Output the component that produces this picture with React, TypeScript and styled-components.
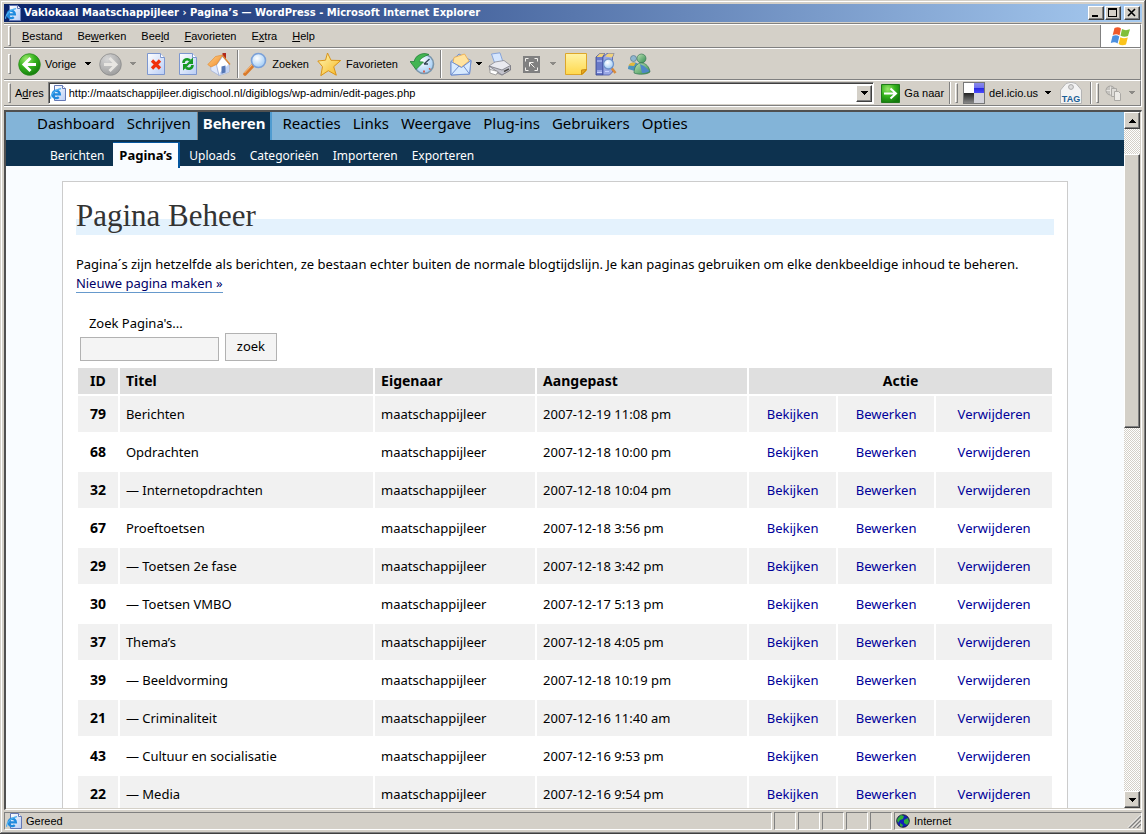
import React from 'react';
import styled, { createGlobalStyle, css } from 'styled-components';

const GlobalStyle = createGlobalStyle`
  *, *::before, *::after { box-sizing: border-box; }
  body { margin: 0; background: #d4d0c8; }
  button, input { font: inherit; color: inherit; margin: 0; padding: 0; border-radius: 0; }
  svg { display: block; flex: none; }
`;

const face = '#d4d0c8';
const uiFont = '"Liberation Sans", Arial, sans-serif';
const pageFont = '"Noto Sans", "Lucida Grande", sans-serif';

const raised = css`
  border: 1px solid;
  border-color: #ffffff #404040 #404040 #ffffff;
  box-shadow: inset -1px -1px 0 #808080;
  background: ${face};
`;

const Window = styled.div`
  display: flex;
  flex-direction: column;
  height: 100vh;
  padding: 4px;
  background: ${face};
  box-shadow: inset -1px -1px 0 #404040, inset 1px 1px 0 #d4d0c8, inset -2px -2px 0 #808080, inset 2px 2px 0 #ffffff;
  font: 11px/14px ${uiFont};
  color: #000;
`;

const TitleBar = styled.header`
  display: flex;
  align-items: center;
  height: 18px;
  flex: none;
  gap: 1px;
  padding: 0 2px 0 1px;
  background: linear-gradient(to right, #0a246a, #a6caf0);
  color: #fff;
`;

const WindowTitle = styled.h1`
  flex: 1;
  margin: 0;
  padding-left: 2px;
  font: bold 10px/18px "DejaVu Sans", sans-serif;
  white-space: nowrap;
`;

const CaptionButton = styled.button<{ $apart?: boolean }>`
  ${raised}
  width: 16px;
  height: 14px;
  margin-left: ${(p) => (p.$apart ? 2 : 0)}px;
  color: #000;
`;

const Bars = styled.div`
  flex: none;
  margin: 1px 0 3px;
  border-top: 1px solid #808080;
  border-right: 1px solid #fff;
`;

const Bar = styled.div<{ $height: number; $end?: number }>`
  display: flex;
  align-items: center;
  height: ${(p) => p.$height}px;
  padding-right: ${(p) => p.$end ?? 0}px;
  border-top: 1px solid #fff;
  border-bottom: 1px solid #808080;
  border-right: 1px solid #808080;
`;

const BarEnd = styled.div`
  height: 1px;
  background: #fff;
`;

const Grip = styled.span`
  flex: none;
  width: 3px;
  height: 20px;
  margin: 0 2px 0 4px;
  border: 1px solid;
  border-color: #fff #808080 #808080 #fff;
`;

const Divider = styled.span<{ $left?: number; $right?: number }>`
  flex: none;
  width: 2px;
  align-self: stretch;
  margin: 1px ${(p) => p.$right ?? 0}px 1px ${(p) => p.$left ?? 0}px;
  background: linear-gradient(to right, #808080 50%, #fff 50%);
`;

const MenuList = styled.nav`
  display: flex;
  flex: 1;
  gap: 1px;
  padding-left: 2px;
`;

const MenuItem = styled.button`
  border: 0;
  background: none;
  padding: 0 7px;
`;

const Throbber = styled.div`
  display: flex;
  align-items: center;
  justify-content: center;
  align-self: stretch;
  width: 40px;
  background: #fff;
  border-left: 1px solid #808080;
`;

const Tool = styled.button<{ $left?: number }>`
  display: flex;
  align-items: center;
  flex: none;
  gap: 4px;
  margin-left: ${(p) => p.$left ?? 0}px;
  border: 0;
  background: none;
  white-space: nowrap;
`;

const AddressLabel = styled.label`
  margin: 0 4px 0 2px;
`;

const AddressBox = styled.div`
  display: flex;
  align-items: center;
  flex: 1;
  height: 22px;
  padding: 0 1px 0 1px;
  background: #fff;
  border: 1px solid;
  border-color: #808080 #fff #fff #808080;
  box-shadow: inset 1px 1px 0 #404040;
`;

const AddressInput = styled.input`
  flex: 1;
  min-width: 0;
  height: 18px;
  margin-left: 3px;
  border: 0;
  background: none;
  outline: none;
`;

const SquareButton = styled.button`
  ${raised}
  display: flex;
  align-items: center;
  justify-content: center;
  flex: none;
  width: 16px;
  height: 17px;
`;

const Viewport = styled.div`
  display: flex;
  flex: 1;
  min-height: 0;
  border: solid;
  border-width: 2px 1px 1px 2px;
  border-color: #505050 #fff #fff #505050;
  padding: 0 1px 1px 0;
`;

const Page = styled.main`
  flex: 1;
  min-width: 0;
  overflow: hidden;
  background: #f9fcff;
  font: 13px/19px ${pageFont};
`;

const AdminMenu = styled.nav`
  display: flex;
  height: 28px;
  padding-left: 25px;
  background: #83b4d8;
  font-size: 15px;
  line-height: 22px;
`;

const AdminLink = styled.a<{ $current?: boolean }>`
  padding: 0 6px;
  color: #000;
  text-decoration: none;
  white-space: nowrap;
  ${(p) =>
    p.$current &&
    css`
      margin-right: 4px;
      padding: 0 5px;
      background: #0d324f;
      border-left: 1px solid #808080;
      border-right: 2px solid #4f9bd0;
      color: #fff;
      font-weight: 700;
    `}
`;

const SubMenu = styled.nav`
  display: flex;
  align-items: flex-start;
  height: 26px;
  padding: 2px 0 0 39px;
  background: #0d324f;
  font-size: 12px;
  line-height: 25px;
`;

const SubLink = styled.a<{ $current?: boolean }>`
  padding: 1px 5px 0;
  margin-right: 4px;
  color: #fff;
  text-decoration: none;
  white-space: nowrap;
  ${(p) =>
    p.$current &&
    css`
      padding: 0 6px;
      border-top: 1px solid #04569f;
      border-right: 2px solid #04569f;
      background: #f9fcff;
      color: #000;
      font-size: 13px;
      font-weight: 700;
    `}
`;

const Wrap = styled.section`
  margin: 15px 5% 0;
  padding: 16px 13px;
  border: 1px solid #ccc;
  background: #fff;
`;

const Heading = styled.h2`
  margin: 0 0 20px;
  padding-bottom: 1px;
  color: #333;
  font: 31px/36px "Liberation Serif", "Times New Roman", serif;
  background: linear-gradient(#e4f2fd, #e4f2fd) no-repeat 0 100% / 100% 16px;
`;

const Intro = styled.p`
  margin: 0 0 21px;
`;

const NewLink = styled.a`
  color: #006;
  text-decoration: none;
  border-bottom: 1px solid #69c;
`;

const SearchForm = styled.form`
  padding: 0 4px;
  margin-bottom: 5px;
`;

const SearchLabel = styled.label`
  display: block;
  padding-left: 9px;
`;

const SearchRow = styled.div`
  display: flex;
  align-items: flex-end;
  gap: 6px;
`;

const SearchInput = styled.input`
  width: 139px;
  height: 24px;
  padding: 0 4px;
  border: 1px solid #b2b2b2;
  background: #f4f4f4;
`;

const SearchButton = styled.button`
  width: 52px;
  height: 28px;
  padding-bottom: 2px;
  border: 1px solid #b2b2b2;
  background: #f4f4f4;
`;

const PageTable = styled.table`
  width: 100%;
  table-layout: fixed;
  border-collapse: separate;
  border-spacing: 2px;
`;

const Col = styled.col<{ $width?: number }>`
  width: ${(p) => (p.$width ? `${p.$width}px` : 'auto')};
`;

const HeadCell = styled.th<{ $center?: boolean }>`
  height: 26px;
  padding: 0 6px 2px;
  background: #dfdfdf;
  font-size: 14px;
  text-align: ${(p) => (p.$center ? 'center' : 'left')};
`;

const Row = styled.tr<{ $shaded: boolean }>`
  background: ${(p) => (p.$shaded ? '#f1f1f1' : 'transparent')};
`;

const IdCell = styled.th`
  height: 36px;
  padding: 0 0 2px;
  font-size: 14px;
`;

const Cell = styled.td`
  padding: 0 6px;
  white-space: nowrap;
`;

const ActionCell = styled(Cell)`
  text-align: center;
`;

const ActionLink = styled.a`
  color: #009;
  text-decoration: none;
`;

const ScrollBar = styled.div`
  display: flex;
  flex-direction: column;
  flex: none;
  width: 16px;
  background: repeating-conic-gradient(#fff 0 25%, ${face} 0 50%) 0 0 / 2px 2px;
`;

const Track = styled.div`
  flex: 1;
  padding-top: 25px;
`;

const Thumb = styled.div`
  ${raised}
  height: 43%;
`;

const StatusBar = styled.footer`
  display: flex;
  flex: none;
  gap: 2px;
  height: 18px;
  margin-top: 2px;
`;

const StatusPane = styled.div<{ $width?: number }>`
  display: flex;
  align-items: center;
  gap: 4px;
  padding-left: 1px;
  flex: ${(p) => (p.$width ? `none` : 1)};
  width: ${(p) => (p.$width ? `${p.$width}px` : 'auto')};
  border: 1px solid;
  border-color: #808080 #fff #fff #808080;
`;

const ZoneText = styled.span`
  flex: 1;
`;

const Caret = ({ faded, up, w = 6 }: { faded?: boolean; up?: boolean; w?: number }) => (
  <svg width={w} height="4" viewBox="0 0 7 4" aria-hidden="true" shapeRendering="crispEdges">
    <path d={up ? 'M0 4h7L3.5 0z' : 'M0 0h7L3.5 4z'} fill={faded ? '#8c8a86' : '#000'} />
  </svg>
);

const DefsSvg = styled.svg`
  position: absolute;
`;

const Defs = () => (
  <DefsSvg width="0" height="0" aria-hidden="true">
    <defs>
      <radialGradient id="green" cx="35%" cy="25%" r="80%"><stop offset="0" stopColor="#9be86c" /><stop offset=".5" stopColor="#35b31d" /><stop offset="1" stopColor="#137a0c" /></radialGradient>
      <radialGradient id="grey" cx="35%" cy="25%" r="80%"><stop offset="0" stopColor="#d6d6d6" /><stop offset="1" stopColor="#9c9c9c" /></radialGradient>
      <linearGradient id="sheet" x1="0" y1="0" x2="1" y2="1"><stop offset="0" stopColor="#fff" /><stop offset="1" stopColor="#b9cdf5" /></linearGradient>
      <linearGradient id="gold" x1="0" y1="0" x2="1" y2="1"><stop offset="0" stopColor="#fff9b8" /><stop offset="1" stopColor="#f6b51e" /></linearGradient>
      <linearGradient id="note" x1="0" y1="0" x2="0" y2="1"><stop offset="0" stopColor="#fff3a6" /><stop offset="1" stopColor="#ffd84c" /></linearGradient>
      <linearGradient id="roof" x1="0" y1="0" x2="1" y2="1"><stop offset="0" stopColor="#ffd08a" /><stop offset="1" stopColor="#f08a26" /></linearGradient>
      <radialGradient id="lens" cx="40%" cy="35%" r="70%"><stop offset="0" stopColor="#fff" /><stop offset="1" stopColor="#9cc9f5" /></radialGradient>
      <linearGradient id="ink" x1="0" y1="0" x2="0" y2="1"><stop offset="0" stopColor="#222" /><stop offset="1" stopColor="#888" /></linearGradient>
      <linearGradient id="azure" x1="0" y1="0" x2="0" y2="1"><stop offset="0" stopColor="#8a8ae8" /><stop offset=".45" stopColor="#7272ee" /><stop offset=".55" stopColor="#2a2ae0" /><stop offset="1" stopColor="#4c4cff" /></linearGradient>
      <linearGradient id="person" x1="0" y1="0" x2="1" y2="1"><stop offset="0" stopColor="#bfe3b4" /><stop offset="1" stopColor="#2f8a50" /></linearGradient>
    </defs>
  </DefsSvg>
);

const IeIcon = () => (
  <svg width="16" height="16" viewBox="0 0 16 16" aria-hidden="true">
    <path d="M4.500.5h8l3 3v12h-11z" fill="url(#sheet)" stroke="#6478b4" />
    <path d="M12.500.5v3h3" fill="#fff" stroke="#6478b4" />
    <path d="M2.500 9.400h7.400a3.700 3.700 0 1 0-1.100 2.700" fill="none" stroke="#1f8ade" strokeWidth="2.300" />
    <path d="M.8 13.800C-.3 11 5 4.300 11 3.600" fill="none" stroke="#4db0f2" strokeWidth="1.200" />
  </svg>
);

const RoundArrow = ({ back }: { back?: boolean }) => (
  <svg width="23" height="23" viewBox="0 0 23 23" aria-hidden="true">
    <circle cx="11.500" cy="11.500" r="10.800" fill={back ? 'url(#green)' : 'url(#grey)'} stroke={back ? '#2a8a1c' : '#8c8c8c'} strokeWidth=".8" />
    <path d={back ? 'M12.500 5 6 11.500l6.500 6.500M6.500 11.500H18' : 'M10.500 5l6.500 6.500-6.500 6.500M16.500 11.500H5'} fill="none" stroke={back ? '#fff' : '#e8e6e2'} strokeWidth="3" />
  </svg>
);

const StopIcon = () => (
  <svg width="20" height="24" viewBox="0 0 20 24" aria-hidden="true">
    <path d="M1.500 1.500h13l4 4v17h-17z" fill="url(#sheet)" stroke="#7d97cf" />
    <path d="M14.500 1.500v4h4" fill="#fff" stroke="#7d97cf" />
    <path d="M6 8.500l8 8M14 8.500l-8 8" stroke="#f0300c" strokeWidth="3.200" />
  </svg>
);

const RefreshIcon = () => (
  <svg width="20" height="24" viewBox="0 0 20 24" aria-hidden="true">
    <path d="M1.500 1.500h13l4 4v17h-17z" fill="url(#sheet)" stroke="#7d97cf" />
    <path d="M14.500 1.500v4h4" fill="#fff" stroke="#7d97cf" />
    <path d="M5.500 11c0-3.500 4-5 6.500-2.500M14.500 13c0 3.500-4 5-6.500 2.500" fill="none" stroke="#169a24" strokeWidth="2.600" />
    <path d="M15 5.500V12H8.500zM5 18.500V12h6.500z" fill="#169a24" />
  </svg>
);

const HomeIcon = () => (
  <svg width="24" height="24" viewBox="0 0 24 24" aria-hidden="true">
    <path d="M15.500 1h3.500v7l-3.500-3z" fill="#b0281c" />
    <path d="M3.500 13.500 10 12l2 11.300L4 18.500z" fill="#dfe8fb" stroke="#9fb0d8" strokeWidth=".7" />
    <path d="M9.500 13 15.500 4.500 22 12v8l-10 3.500z" fill="#fff" stroke="#8fa3cf" strokeWidth=".7" />
    <path d="M22 12v8l-10 3.500 1-3z" fill="#c3d3f3" />
    <path d="M14.500 14.500l4-1v7l-4 1.300z" fill="#5577b5" />
    <path d="M.8 12.500 8.500 4.500 15.500 3 9.500 12.500 4 15z" fill="url(#roof)" stroke="#e08526" strokeWidth=".6" />
    <path d="M15.500 3.500l7.500 9" stroke="#e08a32" strokeWidth="1.300" />
  </svg>
);

const SearchIcon = () => (
  <svg width="25" height="24" viewBox="0 0 25 24" aria-hidden="true">
    <path d="M10 13.500 2 22" stroke="#d97a2b" strokeWidth="3.600" strokeLinecap="round" />
    <path d="M9.500 12.500 1.500 21" stroke="#ffc27d" strokeWidth="1" />
    <circle cx="15.500" cy="8.500" r="7" fill="url(#lens)" stroke="#7aa0d8" strokeWidth="1.600" />
  </svg>
);

const StarIcon = () => (
  <svg width="25" height="24" viewBox="0 0 25 24" aria-hidden="true">
    <path d="M10.500 1l3.500 7.300 9.700.2-7 6.200 2.600 8.500-8-4.500-7.500 5 1.700-9L.8 9l7.700-.8z" fill="url(#gold)" stroke="#d9941a" />
  </svg>
);

const HistoryIcon = () => (
  <svg width="25" height="24" viewBox="0 0 25 24" aria-hidden="true">
    <circle cx="14" cy="12" r="9.500" fill="url(#lens)" stroke="#7a95ab" strokeWidth="1.600" />
    <path d="M14 12l5.500-5M14 12h4" stroke="#345" strokeWidth="1.300" />
    <path d="M19 16.500l1.500 1M14 18.500v2" stroke="#e04020" strokeWidth="1.500" />
    <path d="M19 2.500C12-.5 5 4 4.200 9.500L0 9.500l6 8 7.500-7.500-4.200-.3C10 6.500 14 4.500 19 2.500z" fill="#42b552" stroke="#1c7a33" strokeWidth=".7" />
  </svg>
);

const MailIcon = () => (
  <svg width="22" height="24" viewBox="0 0 22 24" aria-hidden="true">
    <path d="M1 9.500 9 2l12 6.500-1.500 13.500L1 23z" fill="#bcd8fb" stroke="#6f8fd0" />
    <path d="M4 5.500 14.500 2l4.500 7-7.500 6L3 11z" fill="#ffe3a0" stroke="#efa945" strokeWidth=".8" />
    <path d="M1 9.500l10.500 6L21 8.500 19.500 22 1 23z" fill="#d7eaff" stroke="#6f8fd0" />
    <path d="M1 23l8-9M19.500 22l-6-8" stroke="#6f8fd0" />
  </svg>
);

const PrintIcon = () => (
  <svg width="24" height="24" viewBox="0 0 24 24" aria-hidden="true">
    <path d="M3.500 2 12 .8l3 9.200-8 2z" fill="#d5e6ff" stroke="#87a4d9" />
    <path d="M1 14l6-4 9-1.500 6.500 5V18l-8.500 5-12-4.500z" fill="#e9e9ef" stroke="#85858e" strokeWidth=".8" />
    <path d="M1 14l13 4 8.500-4.500V18L14 23z" fill="#c3c3cc" stroke="#76767e" strokeWidth=".8" />
    <path d="M2 17.500 10 19.500l-2 3.500-6-2z" fill="#fff" stroke="#888" strokeWidth=".7" />
    <path d="M16 19.500l5-2.700" stroke="#444" strokeWidth="1.500" />
  </svg>
);

const EditIcon = () => (
  <svg width="17" height="17" viewBox="0 0 17 17" aria-hidden="true">
    <path d="M0 0h17v17H0z" fill="#808080" />
    <path d="M2.500 5.500v-3h3M11.500 2.500h3v3M14.500 11.500v3h-3M5.500 14.500h-3v-3M6.500 10.500v-4h4M6.500 6.500l5 5" fill="none" stroke="#f4f2ee" />
  </svg>
);

const NoteIcon = () => (
  <svg width="22" height="22" viewBox="0 0 22 22" aria-hidden="true">
    <path d="M.5.500h21v17l-4 4H.5z" fill="url(#note)" stroke="#dda62a" />
    <path d="M21.500 16.500l-5 5v-4.500z" fill="#e8a91e" stroke="#c98a12" />
  </svg>
);

const BooksIcon = () => (
  <svg width="22" height="24" viewBox="0 0 22 24" aria-hidden="true">
    <path d="M1 5l4-3.500h4.500L8 5v18H1z" fill="#6a7ac8" stroke="#34428c" strokeWidth=".8" />
    <path d="M8 5l4-3.500h7L17.500 5v15l-3 3H8z" fill="#9aa8e4" stroke="#4a58a8" strokeWidth=".8" />
    <path d="M5 1.500 1.500 5H7l2.500-3.500zM10 4.500l3-3h6l-2 4z" fill="#f0d27a" />
    <path d="M2 9h5M2 19h5M2 20.500h5M10 19.500h4" stroke="#c9d2ff" strokeWidth="1" />
    <path d="M16.500 16l4 5" stroke="#d98a3b" strokeWidth="2.600" />
    <circle cx="13.500" cy="12" r="5" fill="url(#lens)" stroke="#6f93c9" strokeWidth="1.300" />
  </svg>
);

const MessengerIcon = () => (
  <svg width="24" height="22" viewBox="0 0 24 22" aria-hidden="true">
    <circle cx="6.500" cy="5.500" r="3" fill="#8fb6cf" stroke="#57788c" strokeWidth=".7" />
    <path d="M1 16c0-8 11-9 12-1l-5 3z" fill="#4d93bd" />
    <path d="M1.500 12.500C3 9 6 9 8.500 10L7 13z" fill="#e3b93c" />
    <circle cx="14.500" cy="5.500" r="4.500" fill="url(#person)" stroke="#2b6a4c" strokeWidth=".6" />
    <path d="M7 20c0-6 3-10 7.500-10s8 4 8.500 9c-3 2.500-11 3-16 1z" fill="url(#person)" stroke="#236a48" strokeWidth=".6" />
    <path d="M13 11l4 2 5.500 5c-1.500 1.500-5 2-7.500 2z" fill="#4f86c8" />
  </svg>
);

const WindowsFlag = () => (
  <svg width="21" height="20" viewBox="0 0 21 20" aria-hidden="true">
    <path d="M4.500 2C7 .8 9 1 11 2.500L9.500 9.500C7.500 8 5.500 8 2.700 9z" fill="#f0592a" />
    <path d="M12 3c2.500 1.500 5 1.400 8 .3L18 10c-2.500 1.200-5 1-7.500-.3z" fill="#7fbf3a" />
    <path d="M2.500 10c2.500-1 4.800-1 6.800.5L7.600 17.500C5.600 16 3.500 16 .8 17z" fill="#4b8fe0" />
    <path d="M10.300 11.200c2.200 1.300 4.800 1.300 7.500.2L16 18.500c-2.800 1.200-5.200 1-7.400-.4z" fill="#fbc41c" />
  </svg>
);

const GoIcon = () => (
  <svg width="19" height="19" viewBox="0 0 19 19" aria-hidden="true">
    <path d="M.5.500h18v18H.5z" fill="url(#green)" stroke="#1f7a1a" />
    <path d="M3 9.500h12M9.500 4.500l5.500 5-5.500 5" fill="none" stroke="#fff" strokeWidth="2" />
  </svg>
);

const DeliciousIcon = () => (
  <svg width="22" height="22" viewBox="0 0 22 22" aria-hidden="true" shapeRendering="crispEdges">
    <path d="M0 0h22v22H0z" fill="#777" />
    <path d="M1 1h10v10H1z" fill="#fff" />
    <path d="M11 1h10v10H11z" fill="url(#azure)" />
    <path d="M1 11h10v10H1z" fill="url(#ink)" />
    <path d="M11 11h10v10H11z" fill="#d3d3da" />
  </svg>
);

const TagIcon = () => (
  <svg width="22" height="22" viewBox="0 0 22 22" aria-hidden="true">
    <path d="M.5 21.500V8L6 1.500Q11-1 16 1.500L21.500 8v13.500z" fill="#f3f3f3" stroke="#b4b4b4" />
    <circle cx="11" cy="5" r="2.400" fill="#ddd" stroke="#a8a8a8" />
    <text x="11" y="20" textAnchor="middle" fontFamily="Liberation Sans" fontWeight="700" fontSize="9" fill="#1c5f96">TAG</text>
  </svg>
);

const CopyIcon = () => (
  <svg width="17" height="17" viewBox="0 0 17 17" aria-hidden="true">
    <circle cx="5.500" cy="5.500" r="4.500" fill="#c4c2be" stroke="#a5a39f" />
    <path d="M1.500 5.500h8M5.500 1.500v8" stroke="#e6e4e0" />
    <path d="M6.500 3.500h5v8h-5z" fill="#dedcd8" stroke="#aaa8a4" />
    <path d="M9.500 6.500h4l2 2v7h-6z" fill="#eceae6" stroke="#aaa8a4" />
  </svg>
);

const GlobeIcon = () => (
  <svg width="14" height="14" viewBox="0 0 14 14" aria-hidden="true">
    <circle cx="7" cy="7" r="6.300" fill="#1220b8" stroke="#111" strokeWidth=".8" />
    <path d="M2 4l3-3 3 1-1 3-3 1-2 3-1-3zM8 6l4-2 1 4-2 3-3-2zM4 9l3 2-1 2-2-1z" fill="#2fae3a" />
  </svg>
);

const ResizeGrip = () => (
  <svg width="14" height="14" viewBox="0 0 14 14" aria-hidden="true">
    <path d="M2 14 14 2M6 14l8-8M10 14l4-4" stroke="#808080" strokeWidth="1.500" />
    <path d="M1 13.500 13.500 1M5 13.500 13.500 5M9 13.500 13.500 9" stroke="#fff" strokeWidth=".8" />
  </svg>
);

const menus: [string, string, string][] = [
  ['', 'B', 'estand'], ['Be', 'w', 'erken'], ['Bee', 'l', 'd'], ['', 'F', 'avorieten'], ['E', 'x', 'tra'], ['', 'H', 'elp'],
];
const sections = ['Dashboard', 'Schrijven', 'Beheren', 'Reacties', 'Links', 'Weergave', 'Plug-ins', 'Gebruikers', 'Opties'];
const subsections = ['Berichten', 'Pagina’s', 'Uploads', 'Categorieën', 'Importeren', 'Exporteren'];
const pages: [number, string, string][] = [
  [79, 'Berichten', '2007-12-19 11:08 pm'],
  [68, 'Opdrachten', '2007-12-18 10:00 pm'],
  [32, '— Internetopdrachten', '2007-12-18 10:04 pm'],
  [67, 'Proeftoetsen', '2007-12-18 3:56 pm'],
  [29, '— Toetsen 2e fase', '2007-12-18 3:42 pm'],
  [30, '— Toetsen VMBO', '2007-12-17 5:13 pm'],
  [37, 'Thema’s', '2007-12-18 4:05 pm'],
  [39, '— Beeldvorming', '2007-12-18 10:19 pm'],
  [21, '— Criminaliteit', '2007-12-16 11:40 am'],
  [43, '— Cultuur en socialisatie', '2007-12-16 9:53 pm'],
  [22, '— Media', '2007-12-16 9:54 pm'],
];

export default function App() {
  return (
    <>
      <GlobalStyle />
      <Defs />
      <Window>
        <TitleBar>
          <IeIcon />
          <WindowTitle>Vaklokaal Maatschappijleer › Pagina’s — WordPress - Microsoft Internet Explorer</WindowTitle>
          <CaptionButton aria-label="Minimaliseren">
            <svg width="14" height="12" viewBox="0 0 14 12"><path d="M3 8h6v2H3z" /></svg>
          </CaptionButton>
          <CaptionButton aria-label="Maximaliseren">
            <svg width="14" height="12" viewBox="0 0 14 12"><path d="M2 1h9v9H2zM3 3v6h7V3z" fillRule="evenodd" /></svg>
          </CaptionButton>
          <CaptionButton $apart aria-label="Sluiten">
            <svg width="14" height="12" viewBox="0 0 14 12"><path d="M3 2l7 7M10 2 3 9" stroke="#000" strokeWidth="1.600" /></svg>
          </CaptionButton>
        </TitleBar>

        <Bars>
          <Bar $height={24}>
            <Grip />
            <MenuList>
              {menus.map(([a, key, b]) => (
                <MenuItem key={a + key + b}>{a}<u>{key}</u>{b}</MenuItem>
              ))}
            </MenuList>
            <Throbber><WindowsFlag /></Throbber>
          </Bar>
          <Bar $height={32}>
            <Grip />
            <Tool $left={5}><RoundArrow back />Vorige</Tool>
            <Tool $left={9} aria-label="Vorige pagina's"><Caret /></Tool>
            <Tool $left={8} aria-label="Volgende"><RoundArrow /></Tool>
            <Tool $left={8} aria-label="Volgende pagina's"><Caret faded /></Tool>
            <Tool $left={10} aria-label="Stoppen"><StopIcon /></Tool>
            <Tool $left={12} aria-label="Vernieuwen"><RefreshIcon /></Tool>
            <Tool $left={9} aria-label="Startpagina"><HomeIcon /></Tool>
            <Divider $left={6} $right={4} />
            <Tool><SearchIcon />Zoeken</Tool>
            <Tool $left={8}><StarIcon />Favorieten</Tool>
            <Tool $left={12} aria-label="Geschiedenis"><HistoryIcon /></Tool>
            <Divider $left={5} $right={8} />
            <Tool aria-label="E-mail"><MailIcon /><Caret /></Tool>
            <Tool $left={6} aria-label="Afdrukken"><PrintIcon /></Tool>
            <Tool $left={11} aria-label="Bewerken"><EditIcon /></Tool>
            <Tool $left={10} aria-label="Bewerken met"><Caret faded /></Tool>
            <Tool $left={9} aria-label="Discussiëren"><NoteIcon /></Tool>
            <Tool $left={8} aria-label="Onderzoek"><BooksIcon /></Tool>
            <Tool $left={10} aria-label="Messenger"><MessengerIcon /></Tool>
          </Bar>
          <Bar $height={26} $end={5}>
            <Grip />
            <AddressLabel htmlFor="address">A<u>d</u>res</AddressLabel>
            <AddressBox>
              <IeIcon />
              <AddressInput id="address" defaultValue="http://maatschappijleer.digischool.nl/digiblogs/wp-admin/edit-pages.php" />
              <SquareButton aria-label="Adreslijst"><Caret w={7} /></SquareButton>
            </AddressBox>
            <Tool $left={7}><GoIcon />Ga naar</Tool>
            <Divider $left={5} />
            <Grip />
            <Tool $left={3}><DeliciousIcon />del.icio.us</Tool>
            <Tool $left={7} aria-label="del.icio.us menu"><Caret /></Tool>
            <Tool $left={9} aria-label="Label toevoegen"><TagIcon /></Tool>
            <Divider $left={8} />
            <Grip />
            <Tool $left={4} aria-label="Converteren"><CopyIcon /></Tool>
            <Tool $left={7} aria-label="Conversiemenu"><Caret faded /></Tool>
          </Bar>
          <BarEnd />
        </Bars>

        <Viewport>
          <Page>
            <AdminMenu>
              {sections.map((s) => (
                <AdminLink key={s} href="#" $current={s === 'Beheren'}>{s}</AdminLink>
              ))}
            </AdminMenu>
            <SubMenu>
              {subsections.map((s) => (
                <SubLink key={s} href="#" $current={s === 'Pagina’s'}>{s}</SubLink>
              ))}
            </SubMenu>
            <Wrap>
              <Heading>Pagina Beheer</Heading>
              <Intro>
                Pagina´s zijn hetzelfde als berichten, ze bestaan echter buiten de normale blogtijdslijn. Je kan paginas gebruiken om elke denkbeeldige inhoud te beheren.
                <br />
                <NewLink href="#">Nieuwe pagina maken »</NewLink>
              </Intro>
              <SearchForm onSubmit={(e) => e.preventDefault()}>
                <SearchLabel htmlFor="search">Zoek Pagina's...</SearchLabel>
                <SearchRow>
                  <SearchInput id="search" type="text" />
                  <SearchButton type="submit">zoek</SearchButton>
                </SearchRow>
              </SearchForm>
              <PageTable>
                <colgroup>
                  <Col $width={40} />
                  <Col />
                  <Col $width={160} />
                  <Col $width={210} />
                  <Col $width={87} />
                  <Col $width={96} />
                  <Col $width={116} />
                </colgroup>
                <thead>
                  <tr>
                    <HeadCell $center>ID</HeadCell>
                    <HeadCell>Titel</HeadCell>
                    <HeadCell>Eigenaar</HeadCell>
                    <HeadCell>Aangepast</HeadCell>
                    <HeadCell $center colSpan={3}>Actie</HeadCell>
                  </tr>
                </thead>
                <tbody>
                  {pages.map(([id, title, date], i) => (
                    <Row key={id} $shaded={i % 2 === 0}>
                      <IdCell scope="row">{id}</IdCell>
                      <Cell>{title}</Cell>
                      <Cell>maatschappijleer</Cell>
                      <Cell>{date}</Cell>
                      <ActionCell><ActionLink href="#">Bekijken</ActionLink></ActionCell>
                      <ActionCell><ActionLink href="#">Bewerken</ActionLink></ActionCell>
                      <ActionCell><ActionLink href="#">Verwijderen</ActionLink></ActionCell>
                    </Row>
                  ))}
                </tbody>
              </PageTable>
            </Wrap>
          </Page>
          <ScrollBar>
            <SquareButton aria-label="Omhoog"><Caret up w={7} /></SquareButton>
            <Track><Thumb /></Track>
            <SquareButton aria-label="Omlaag"><Caret w={7} /></SquareButton>
          </ScrollBar>
        </Viewport>

        <StatusBar>
          <StatusPane><IeIcon />Gereed</StatusPane>
          <StatusPane $width={22} />
          <StatusPane $width={22} />
          <StatusPane $width={22} />
          <StatusPane $width={22} />
          <StatusPane $width={22} />
          <StatusPane $width={248}><GlobeIcon /><ZoneText>Internet</ZoneText><ResizeGrip /></StatusPane>
        </StatusBar>
      </Window>
    </>
  );
}
